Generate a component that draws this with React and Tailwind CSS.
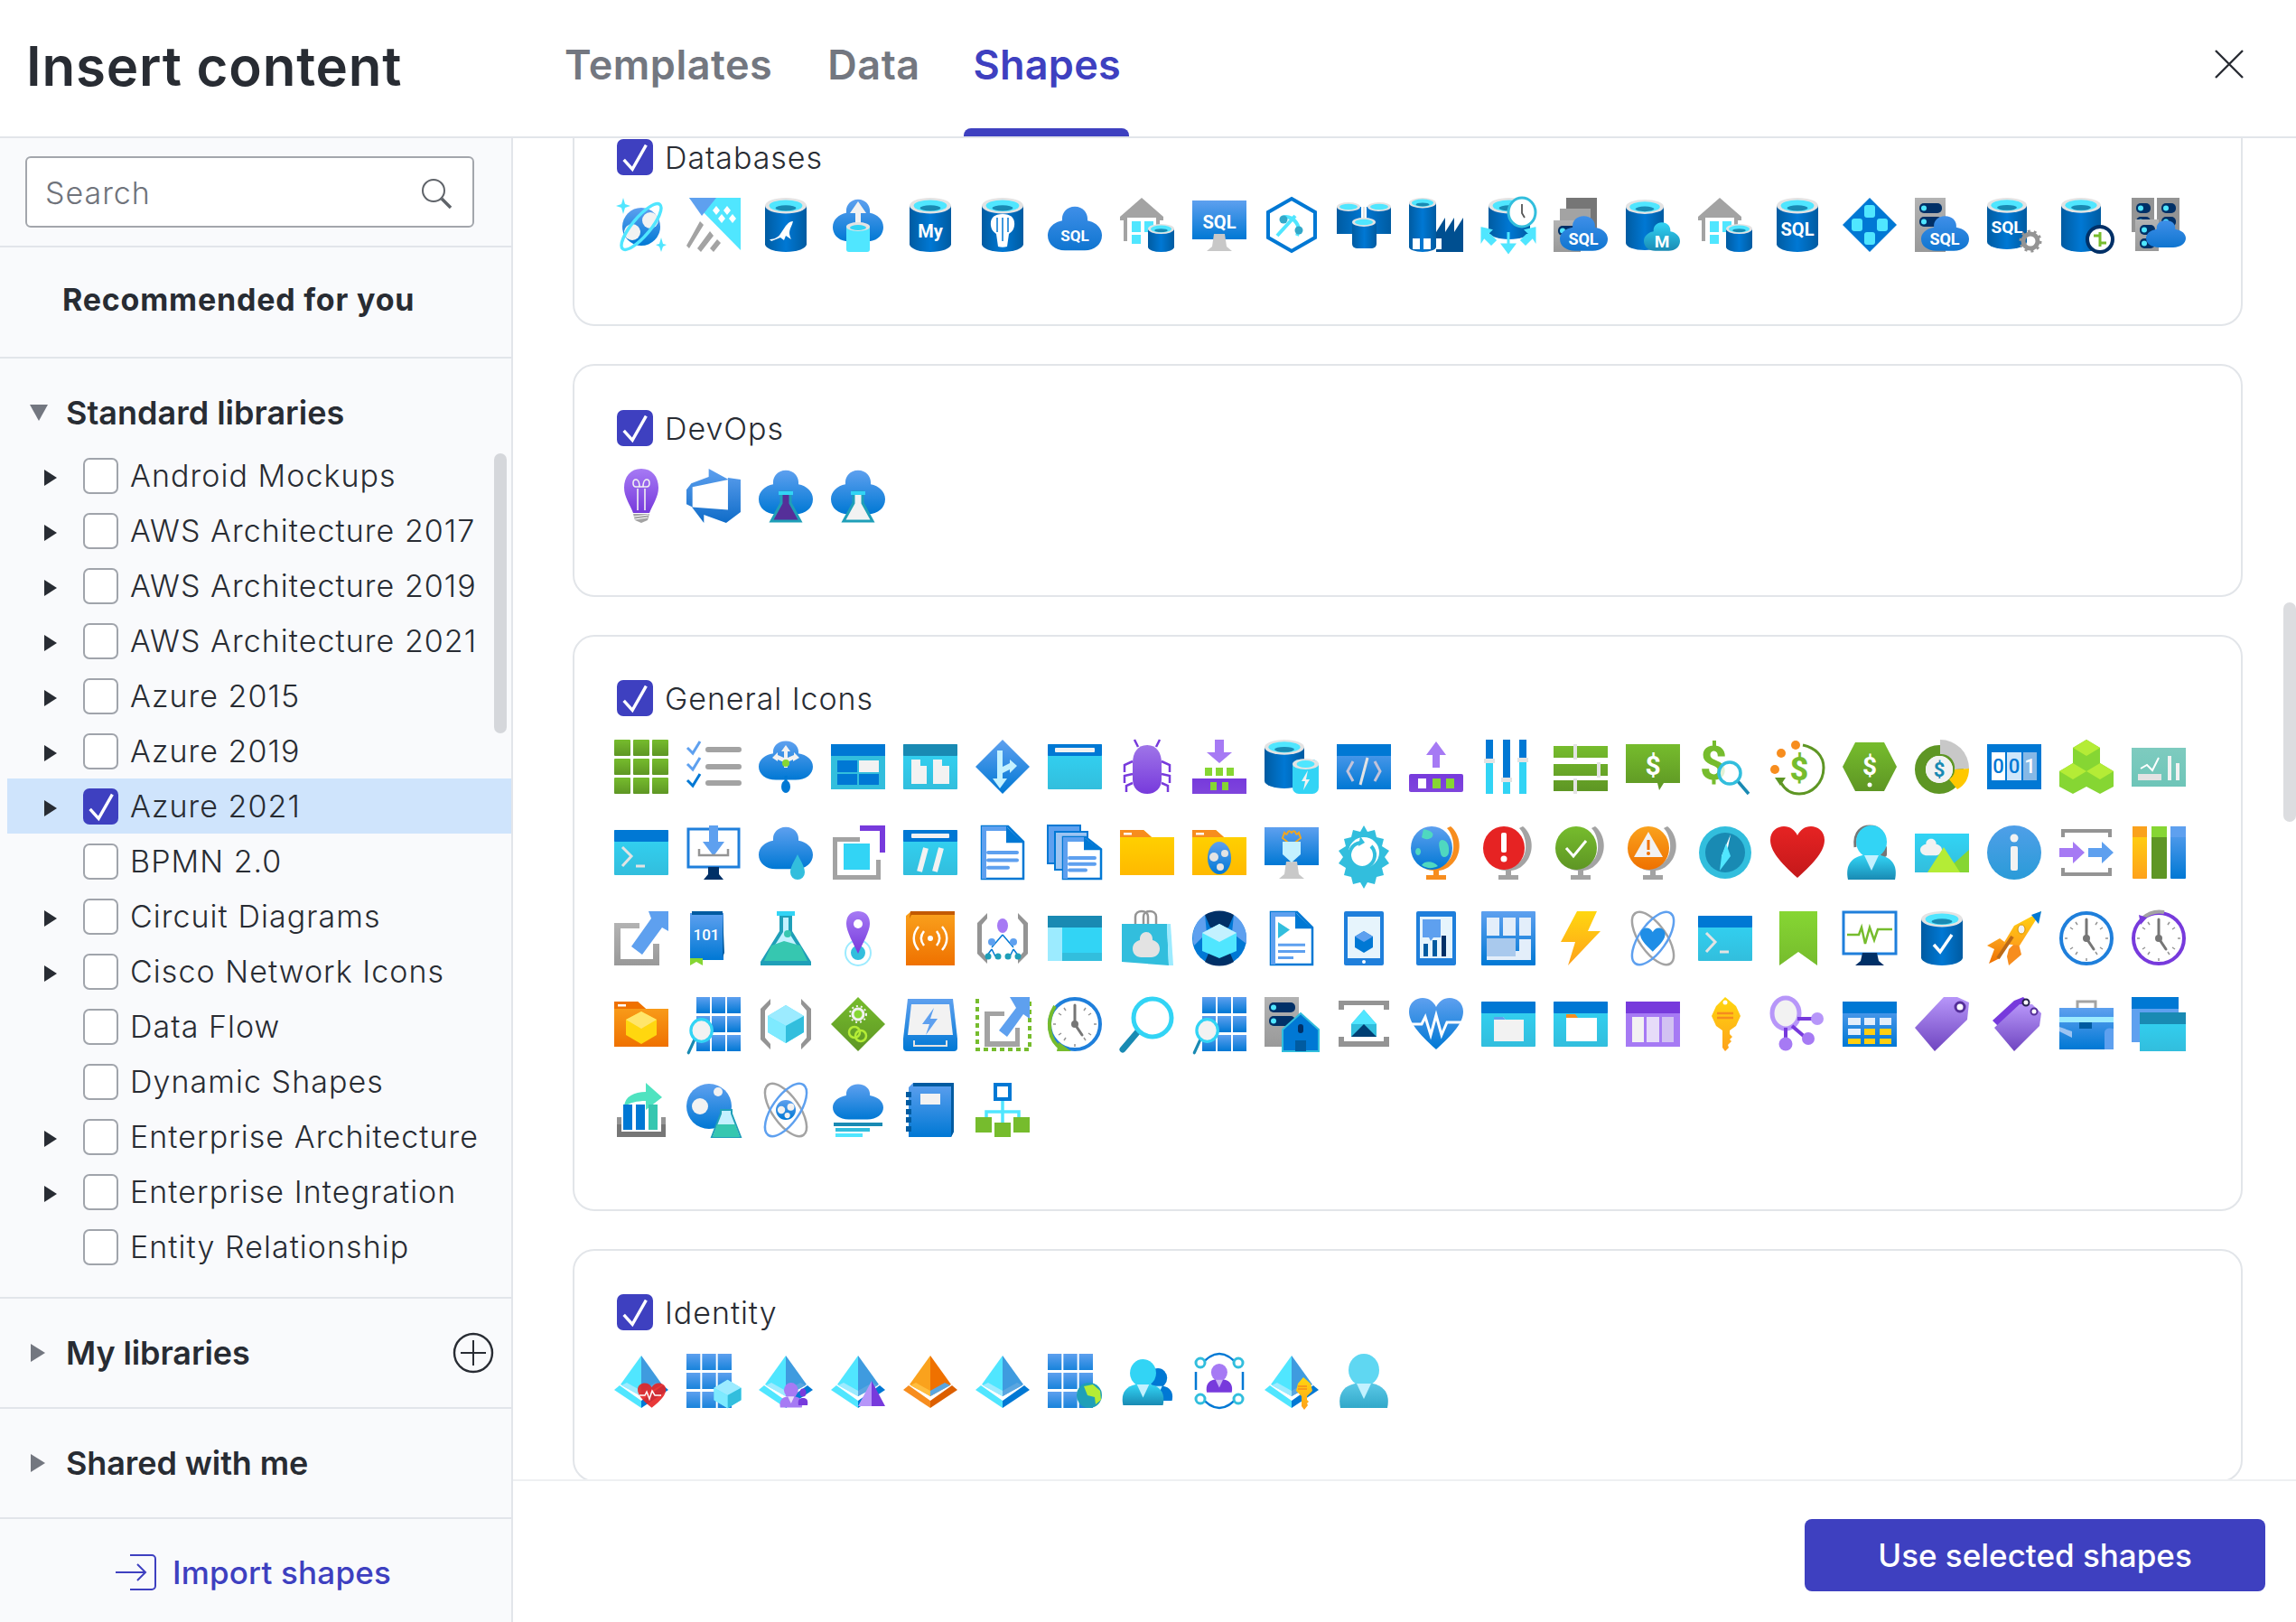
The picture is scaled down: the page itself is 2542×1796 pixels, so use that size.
import React from 'react';

const B = 'url(#gb)';
const CY = 'url(#gc)';
const CB = 'url(#gcy)';
const GR = 'url(#gg)';
const PU = 'url(#gp)';
const OR = 'url(#go)';
const YE = 'url(#gy)';
const GY = 'url(#gs)';
const TE = 'url(#gt)';

const CLOUD = 'M30 2c9 0 14 8 14 15v3c9 2 16 9 16 19 0 11-8 19-19 19H19C8 58 0 50 0 39c0-10 7-17 16-19v-3C16 10 21 2 30 2z';
const HEART = 'M30 58C10 40 0 28 0 16 0 6 8 1 15 1c7 0 12 4 15 10C33 5 38 1 45 1c7 0 15 5 15 15 0 12-10 24-30 42z';

const Cyl = ({ x = 0, y = 0, w = 46, h = 60 }) => {
    const rx = w / 2;
    const ry = w * 0.19;
    const cx = x + rx;
    const cy = y + ry;
    return (
        <>
            <path d={`M${x} ${cy}V${y + h - ry}A${rx} ${ry} 0 0 0 ${x + w} ${y + h - ry}V${cy}z`} fill={CB} />
            <ellipse cx={cx} cy={cy} rx={rx} ry={ry} fill="#e3e3e3" />
            <ellipse cx={cx} cy={cy} rx={rx * 0.8} ry={ry * 0.72} fill="#50e6ff" />
            <ellipse cx={cx} cy={cy + ry * 0.3} rx={rx * 0.5} ry={ry * 0.35} fill="#198ab3" />
        </>
    );
};

const Cloud = ({ x = 0, y = 0, w = 60, h = 60, f = B }) => (
    <path transform={`translate(${x} ${y}) scale(${w / 60} ${h / 60})`} d={CLOUD} fill={f} />
);

const T = ({ x, y, s = 18, f = '#fff', w = 700, children }) => (
    <text x={x} y={y} fontSize={s} fill={f} fontWeight={w} textAnchor="middle" fontFamily="Roboto, sans-serif">{children}</text>
);

const Win = ({ head = '#0078d4', body = CY, y = 5, h = 50 }) => (
    <>
        <rect y={y} width="60" height={h} rx="1" fill={body} />
        <rect y={y} width="60" height="13" rx="1" fill={head} />
    </>
);

const House = ({ dx = 0 }) => (
    <g transform={`translate(${dx} 0)`}>
        <path d="M24 0L48 21v4H0v-4z" fill="#a3a3a3" />
        <rect x="4" y="22" width="40" height="26" fill="#fff" />
        <path d="M4 22h4v26H4zM40 22h4v8h-4z" fill="#a3a3a3" />
        <path d="M13 26h10v12H13zM27 26h10v12H27zM13 41h10v10H13z" fill="#50e6ff" />
    </g>
);

const Monitor = ({ stand = '#c8c8c8' }) => (
    <path d="M24 40h12l2 14 6 5H16l6-5z" fill={stand} />
);

const Server = ({ x = 0, y = 0, w = 34, h = 60, rows = 2, f = GY }) => (
    <>
        <rect x={x} y={y} width={w} height={h} fill={f} />
        {[...Array(rows)].map((_, i) => (
            <g key={i}>
                <rect x={x + 5} y={y + 6 + i * 15} width={w - 9} height="11" rx="5" fill="#003067" />
                <circle cx={x + 10} cy={y + 11.5 + i * 15} r="3" fill="#50e6ff" />
            </g>
        ))}
    </>
);

const Grid = ({ f = B, x = 0, w = 60 }) => (
    <>
        {[0, 1, 2].map(r => [0, 1, 2].map(c => (
            <rect key={`${r}-${c}`} x={x + c * (w / 3)} y={r * 21} width={w / 3 - 2} height="18" fill={f} />
        )))}
    </>
);

const Mag = ({ x = 0, y = 0, s = 1 }) => (
    <g transform={`translate(${x} ${y}) scale(${s})`}>
        <path d="M12 36L2 58" stroke="#198ab3" strokeWidth="5" strokeLinecap="round" />
        <ellipse cx="24" cy="20" rx="18" ry="19" fill="#f2f2f2" stroke="#32d4f5" strokeWidth="5" />
    </g>
);

const Bracket = ({ f = '#949494' }) => (
    <path d="M13 2L2 13v34l11 11v-6l-6-7V15l6-7zM47 2l11 11v34L47 58v-6l6-7V15l-6-7z" fill={f} />
);

const Gem = ({ x = 0, y = 0, s = 1 }) => (
    <g transform={`translate(${x} ${y}) scale(${s})`}>
        <path d="M30 9l20 12v18L30 51 10 39V21z" fill="#50e6ff" />
        <path d="M30 9l20 12-20 11-20-11z" fill="#9cebff" />
        <path d="M30 32l20-11v18L30 51z" fill="#32bedd" />
        <path d="M30 32v19L10 39V21z" fill="#7eeaff" />
    </g>
);

const Clock = ({ ring = '#1f7fdb', hands = '#767676' }) => (
    <>
        <ellipse cx="30" cy="30" rx="28" ry="28" fill="#fff" stroke={ring} strokeWidth="4" />
        <path d="M30 9v21l8 12" fill="none" stroke={hands} strokeWidth="3" strokeLinecap="round" />
        <circle cx="30" cy="30" r="4" fill={hands} />
        <path d="M30 52v3M9 30H6M54 30h-3M18 12l2 3M42 12l-2 3M18 48l2-3M42 48l-2-3M12 42l3-2M12 18l3 2M48 18l-3 2M48 42l-3-2" stroke="#949494" strokeWidth="1.5" />
    </>
);

const Atom = ({ ring = '#5ea0ef', ring2 = '#a3a3a3' }) => (
    <>
        <ellipse cx="30" cy="30" rx="15" ry="34" transform="rotate(-35 30 30)" fill="none" stroke={ring2} strokeWidth="2.5" />
        <ellipse cx="30" cy="30" rx="15" ry="34" transform="rotate(35 30 30)" fill="none" stroke={ring} strokeWidth="2.5" />
    </>
);

const Ball = ({ cx = 30, cy = 30, r = 22 }) => (
    <>
        <circle cx={cx} cy={cy} r={r} fill={B} />
        <circle cx={cx - r * 0.45} cy={cy} r={r * 0.38} fill="#f2f2f2" />
        <circle cx={cx + r * 0.5} cy={cy - r * 0.3} r={r * 0.36} fill="#f2f2f2" />
        <circle cx={cx + r * 0.15} cy={cy + r * 0.55} r={r * 0.28} fill="#f2f2f2" />
    </>
);

const Doc = ({ x = 0, y = 0, w = 48, h = 60, play }) => (
    <g transform={`translate(${x} ${y})`}>
        <path d={`M1 1H${w - 18}L${w - 1} ${h * 0.3}V${h - 1}H1z`} fill="#fff" stroke="#0078d4" strokeWidth="2.5" />
        <path d={`M${w - 20} 1L${w - 1} ${h * 0.32}H${w - 20}z`} fill="#0078d4" />
        <path d={`M1 1H${w - 20}V6H6V${h - 1}H1z`} fill="#5ea0ef" />
        {!play && <path d={`M8 ${h * 0.5}H${w - 8}M8 ${h * 0.64}H${w - 8}M8 ${h * 0.78}H${w - 18}`} stroke="#5ea0ef" strokeWidth="4" strokeLinecap="round" />}
        {play && <path d={`M9 ${h * 0.2}L22 ${h * 0.34}L9 ${h * 0.5}z`} fill="#32bedd" />}
        {play && <path d={`M9 ${h * 0.62}H${w - 9}M9 ${h * 0.74}H${w - 9}M9 ${h * 0.86}H${w - 22}`} stroke="#5ea0ef" strokeWidth="3" />}
    </g>
);

const Folder = ({ f = 'url(#gfy)', tab = '#f78d1e' }) => (
    <>
        <path d="M0 5h26l9 8h25v42H0z" fill={f} />
        <path d="M0 5h26l9 8H0z" fill={tab} />
        <rect x="4" y="8" width="9" height="2.5" fill="#fff" />
    </>
);

const Orb = ({ fill, ring = '#a3a3a3', children }) => (
    <>
        <path d="M46 1c10 8 13 24 6 36-5 8-11 12-19 13v5h8v5H19v-5h8v-5c-3 0-6-1-9-2l2-3c10 4 20 0 26-9 6-10 3-26-4-33z" fill={ring} />
        <ellipse cx="25" cy="25" rx="23" ry="24" fill={fill} />
        {children}
    </>
);

const Pyr = ({ l = '#50e6ff', r = '#3f9bdf', low = '#9cebff', bl = '#50e6ff', br = '#0078d4' }) => (
    <>
        <path d="M30 2L7 34l23 13z" fill={l} />
        <path d="M30 2L53 34 30 47z" fill={r} />
        <path d="M14 32l16 9v6L8 35z" fill={low} />
        <path d="M46 32l-16 9v6l22-12z" fill="#5aa6e0" />
        <path d="M6 35L0 40l30 20V52z" fill={bl} />
        <path d="M54 35l6 5-30 20V52z" fill={br} />
    </>
);

const Person = ({ x = 0, y = 0, s = 1, head = '#32d4f5', body = TE, collar = '#c3f1ff' }) => (
    <g transform={`translate(${x} ${y}) scale(${s})`}>
        <ellipse cx="30" cy="18" rx="17" ry="18" fill={head} />
        <path d="M4 60c-3-14 2-24 16-27h20c14 3 19 13 16 27z" fill={body} />
        <path d="M22 33h16l-8 17z" fill={collar} />
    </g>
);

const databases = [
    <><path d="M10 0l2 7 6 2-6 2-2 7-2-7-6-2 6-2zM52 44l2 7 4 1-4 2-2 6-2-6-4-2 4-1z" fill="#50e6ff" /><circle cx="30" cy="32" r="21" fill={B} /><circle cx="20" cy="38" r="9" fill="#f2f2f2" /><circle cx="40" cy="25" r="9" fill="#f2f2f2" /><ellipse cx="30" cy="32" rx="32" ry="10" transform="rotate(-50 30 32)" fill="none" stroke="#50e6ff" strokeWidth="3.5" /></>,
    <><path d="M3 0h57v58z" fill="#50e6ff" /><path d="M3 0h30L17 20z" fill="#5ea0ef" /><path d="M33 9l4 5-4 5-4-5zM45 9l4 5-4 5-4-5zM39 18l4 5-4 5-4-5zM51 18l4 5-4 5-4-5z" fill="#fff" /><path d="M15 26l4 4L3 56l-3-3zM26 37l4 5-14 18-4-4zM34 46l4 4-8 10-4-4z" fill="#a3a3a3" /></>,
    <><Cyl x={7} /><path d="M12 46c3 0 9-1 12-6l6-9c2-2 4-5 8-5-1 5-4 8-4 13 0 3 2 7 2 7l-6-4-2 5-4-3-10 4z" fill="#fff" /></>,
    <><Cloud x={2} w={56} h={50} /><path d="M30 4l9 13h-6v16h-6V17h-6z" fill="#f2f2f2" /><rect x="17" y="30" width="26" height="30" rx="3" fill="#50e6ff" /><ellipse cx="30" cy="32" rx="13" ry="5" fill="#e3e3e3" /><ellipse cx="30" cy="33" rx="9" ry="3" fill="#32d4f5" /></>,
    <><Cyl x={7} /><T x={30} y={44} s={20}>My</T></>,
    <><Cyl x={7} /><path d="M30 18c10 0 14 5 13 13-1 6-4 7-6 9l-2 14c-3 1-7 1-10 0l-2-14c-2-2-5-3-6-9-1-8 3-13 13-13z" fill="#fff" /><path d="M24 22v16M36 22v16M30 22v26" stroke="#0078d4" strokeWidth="1.5" /></>,
    <><Cloud y={8} h={52} w={60} f="url(#gb2)" /><T x={30} y={48} s={17}>SQL</T></>,
    <><House /><Cyl x={31} y={29} w={29} h={31} /></>,
    <><rect y="3" width="60" height="43" fill={B} /><Monitor /><T x={30} y={34} s={20}>SQL</T></>,
    <><path d="M30 1l26 15v28L30 59 4 44V16z" fill="none" stroke="#0078d4" strokeWidth="4" /><path d="M14 42l20-22M20 22c8-4 22 6 16 20" fill="none" stroke="#50e6ff" strokeWidth="4" /><circle cx="21" cy="24" r="4.5" fill="#32a8c9" /><circle cx="38" cy="36" r="4.5" fill="#32a8c9" /></>,
    <><path d="M0 10h27v30H0zM33 10h27v30H33z" fill={CB} /><rect x="17" y="26" width="27" height="30" rx="5" fill={CB} /><ellipse cx="13" cy="10" rx="13" ry="5" fill="#e3e3e3" /><ellipse cx="47" cy="10" rx="13" ry="5" fill="#e3e3e3" /><ellipse cx="13" cy="10" rx="10" ry="3.2" fill="#50e6ff" /><ellipse cx="47" cy="10" rx="10" ry="3.2" fill="#50e6ff" /><ellipse cx="30" cy="27" rx="13" ry="5" fill="#e3e3e3" /><ellipse cx="30" cy="27" rx="10" ry="3.2" fill="#50e6ff" /><path d="M29 10h2v12h-2z" fill="#e3e3e3" /></>,
    <><Cyl x={0} w={30} /><path d="M30 60V38l10-16v16l10-16v16l10-16v38z" fill="#004f90" /><path d="M16 45h8v12h-8zM4 45h8v12H4zM30 45h6v12h-6z" fill="#fff" /></>,
    <><Cyl x={8} w={46} h={46} /><ellipse cx="45" cy="16" rx="15" ry="16" fill="#fff" stroke="#32bedd" strokeWidth="3" /><path d="M45 7v10l3 5" fill="none" stroke="#555" strokeWidth="1.8" /><path d="M30 38v14h-6l6 8 6-8h-6M1 34l9 2-3 3 8 8-4 4-8-8-2 3zM59 34l-9 2 3 3-8 8 4 4 8-8 2 3z" fill="#50e6ff" stroke="#50e6ff" strokeWidth="3" /></>,
    <><rect x="14" y="0" width="34" height="50" fill="#767676" /><rect x="7" y="12" width="34" height="40" fill="#a3a3a3" /><Server y={25} w={30} h={35} rows={1} /><Cloud x={7} y={19} w={53} h={41} f="url(#gb2)" /><T x={33} y={52} s={18}>SQL</T></>,
    <><Cyl x={0} y={2} w={42} h={56} /><Cloud x={20} y={26} w={40} h={34} f={TE} /><T x={40} y={55} s={19}>M</T></>,
    <><House /><Cyl x={31} y={29} w={29} h={31} /></>,
    <><Cyl x={7} /><T x={30} y={42} s={20}>SQL</T></>,
    <><path d="M30 0l30 30-30 30L0 30z" fill="#0078d4" /><rect x="24" y="8" width="12" height="14" rx="3" fill="#50e6ff" /><rect x="24" y="38" width="12" height="14" rx="3" fill="#50e6ff" /><rect x="10" y="23" width="12" height="14" rx="3" fill="#50e6ff" /><rect x="38" y="23" width="12" height="14" rx="3" fill="#50e6ff" /></>,
    <><Server w={34} h={60} /><Cloud x={7} y={19} w={53} h={41} f="url(#gb2)" /><T x={33} y={52} s={18}>SQL</T></>,
    <><Cyl x={0} w={44} h={57} /><T x={22} y={39} s={19}>SQL</T><circle cx="48" cy="48" r="8" fill="none" stroke="#949494" strokeWidth="5" /><circle cx="48" cy="48" r="11" fill="none" stroke="#949494" strokeWidth="3" strokeDasharray="3 3.9" /></>,
    <><Cyl x={2} w={44} /><circle cx="45" cy="46" r="14" fill="#fff" stroke="#003067" strokeWidth="4" /><path d="M38 42h7v4M52 50h-7v-4M45 38v8M45 46v8" fill="none" stroke="#76bc2d" strokeWidth="3" /></>,
    <><Server w={25} h={38} f="#949494" /><Server x={28} w={25} h={38} f="#949494" /><Server x={4} y={24} w={26} h={35} /><Cloud x={16} y={24} w={44} h={32} f="url(#gb2)" /></>,
];

const devops = [
    <><path d="M30 0c12 0 19 9 19 21 0 10-6 18-10 28H21C17 39 11 31 11 21 11 9 18 0 30 0z" fill="url(#gp2)" /><path d="M26 46V22M34 46V22M24 12c-4 0-4 8 0 8h12c4 0 4-8 0-8s-4 8-4 8h-4s0-8-4-8z" fill="none" stroke="#f2f2f2" strokeWidth="1.6" /><path d="M21 50h18l-2 7-7 3-7-3z" fill="#a3a3a3" /><path d="M22 53l16-2M23 56l14-2" stroke="#fff" strokeWidth="1" /></>,
    <path transform="scale(3.33)" d="M18 3.6v10.8L13.2 18l-7.4-2.7V18l-4-5.2 12 .9V3zM14 3.6L7.4 0v2.7L1.6 4.9 0 7v4.8l2 1V6.1z" fill="url(#gb3)" />,
    <><Cloud h={52} /><path d="M25 26h10v12l11 20H14l11-20z" fill="#552f99" stroke="#1f9fb8" strokeWidth="3" /><rect x="22" y="25" width="16" height="4" fill="#32d4f5" /></>,
    <><Cloud h={52} /><path d="M25 26h10v12l11 20H14l11-20z" fill="#f2f2f2" stroke="#1f9fb8" strokeWidth="3" /><rect x="22" y="25" width="16" height="4" fill="#32d4f5" /></>,
];

const general = [
    // row 1
    <>{[0, 1, 2].map(r => [0, 1, 2].map(c => <rect key={`${r}${c}`} x={c * 21} y={r * 21} width="18" height="18" rx="1" fill={GR} />))}</>,
    <><path d="M1 9l6 6L15 2M1 27l6 6L15 20" fill="none" stroke="#5ea0ef" strokeWidth="3" /><path d="M1 45l6 6 8-13" fill="none" stroke="#0078d4" strokeWidth="3" /><path d="M24 11h34M24 30h34M24 48h34" stroke="#a3a3a3" strokeWidth="6" strokeLinecap="round" /></>,
    <><Cloud w={60} h={46} /><path d="M30 6l5 7h-3v7l7-3v-3l6 6-7 4v-2l-6 3v6h-4v-6l-7-3v2l-6-4 6-6v3l7 3v-7h-3z" fill="#f2f2f2" /><circle cx="30" cy="26" r="4" fill="#86d633" /><ellipse cx="30" cy="52" rx="5" ry="7" fill="#0078d4" /><rect x="28.5" y="40" width="3" height="8" fill="#0078d4" /></>,
    <><rect y="5" width="60" height="50" fill="#32bedd" /><rect y="5" width="60" height="13" fill="#0078d4" /><rect x="7" y="23" width="22" height="13" fill="#0078d4" /><rect x="31" y="23" width="22" height="13" fill="#f2f2f2" /><rect x="7" y="38" width="22" height="12" fill="#0078d4" /><rect x="31" y="38" width="22" height="12" fill="#0078d4" /></>,
    <><Win head="#198ab3" /><path d="M9 22h10v7h7v20H9zM33 22h10v7h8v20H33z" fill="#f2f2f2" /></>,
    <><path d="M30 0l30 30-30 30L0 30z" fill={B} /><path d="M30 12v18l8-4v-4l8 7-8 8v-4l-8 4v6h5l-8 11-8-11h5V12z" fill="#c3f1ff" /></>,
    <><Win /><rect x="8" y="9" width="44" height="5" rx="1" fill="#f2f2f2" /></>,
    <><path d="M20 8L16 0M40 8l4-8" stroke="#773adc" strokeWidth="2.5" /><path d="M30 6c11 0 16 9 16 20v18c0 10-7 16-16 16s-16-6-16-16V26C14 15 19 6 30 6z" fill="url(#gp3)" /><path d="M14 24L5 28v8M46 24l9 4v8M14 38l-9 2v8M46 38l9 2v8M14 48l-7 3v7M46 48l7 3v7" fill="none" stroke="#773adc" strokeWidth="2.5" /></>,
    <><path d="M25 0h10v14h9L30 26 16 14h9z" fill="#a67af4" /><path d="M14 31h8v9h-8zM26 31h8v9h-8zM38 31h8v9h-8z" fill="#86d633" /><rect y="43" width="60" height="17" fill={PU} /><path d="M20 47h7v9h-7zM33 47h7v9h-7z" fill="#86d633" /></>,
    <><Cyl x={0} w={44} h={54} /><rect x="31" y="22" width="29" height="38" rx="7" fill="#32d4f5" /><ellipse cx="45.5" cy="27" rx="14.5" ry="6" fill="#e3e3e3" /><ellipse cx="45.5" cy="27" rx="10" ry="4" fill="#50e6ff" /><path d="M48 34l-7 12h4l-2 10 7-12h-4z" fill="#f2f2f2" /></>,
    <><rect y="5" width="60" height="50" fill={B} /><rect y="5" width="60" height="13" fill="#0078d4" /><path d="M18 24L12 35l6 11M42 24l6 11-6 11" fill="none" stroke="#c3c3d9" strokeWidth="3" /><path d="M34 20l-8 30" stroke="#e3e3e3" strokeWidth="3" /></>,
    <><path d="M30 2l11 15h-7v14h-8V17h-7z" fill="#a67af4" /><rect y="38" width="60" height="20" rx="2" fill={PU} /><path d="M10 43h9v11h-9z" fill="#fff" /><path d="M26 43h9v11h-9zM41 43h9v11h-9z" fill="#86d633" /></>,
    <><path d="M5 0h8v24H5zM24 0h8v44h-8zM42 0h8v20h-8z" fill="#0078d4" /><path d="M5 24h8v36H5zM24 44h8v16h-8zM42 20h8v40h-8z" fill="#32d4f5" /><path d="M3 21h12v5H3zM22 42h12v5H22zM40 20h12v5H40z" fill="#e3e3e3" /></>,
    <><path d="M0 7h60v13H0zM0 27h60v13H0zM0 45h60v12H0z" fill={GR} /><path d="M22 5h4v17h-4zM48 25h4v17h-4zM22 43h4v17h-4z" fill="#e3e3e3" /></>,
    <><path d="M0 5h60v43H42l-5 8-2-8H0z" fill={GR} /><T x={30} y={39} s={30}>$</T></>,
    <><T x={17} y={44} s={52} f="#76bc2d" w={800}>$</T><path d="M44 46l12 14" stroke="#198ab3" strokeWidth="3.5" /><circle cx="35" cy="37" r="12" fill="#fff" fillOpacity=".8" stroke="#32bedd" strokeWidth="3.5" /></>,
    <><circle cx="28" cy="6" r="5" fill="#f78d1e" /><circle cx="12" cy="15" r="5" fill="#f78d1e" /><circle cx="5" cy="33" r="5" fill="#f78d1e" /><path d="M36 6c14 3 23 12 23 25 0 17-13 29-27 29-9 0-16-5-20-12" fill="none" stroke="#5e9624" strokeWidth="3" /><path d="M5 42h12l-6 9z" fill="#5e9624" /><T x={32} y={45} s={36} f="#76bc2d" w={800}>$</T></>,
    <><path d="M14 3h32l14 27-14 27H14L0 30z" fill={GR} /><T x={30} y={39} s={28}>$</T><circle cx="30" cy="50" r="2.5" fill="#fff" /></>,
    <><circle cx="27" cy="33" r="21" fill="none" stroke="#5e9624" strokeWidth="12" /><path d="M28 0a32 32 0 0 1 32 32l-16 1A15 15 0 0 0 28 16z" fill="#c8c8c8" /><path d="M44 33l16-1c0 11-5 19-13 23l-9-11c4-3 6-6 6-11z" fill="#ffc800" /><circle cx="27" cy="33" r="15" fill="#f2f2f2" /><T x={27} y={41} s={22} f="#198ab3">$</T></>,
    <><rect y="5" width="60" height="50" fill="#0078d4" /><path d="M5 14h15v31H5z" fill="#fff" /><path d="M22 14h16v31H22z" fill="#cfe6fa" /><path d="M40 14h15v31H40z" fill="#86b8e6" /><T x={12.5} y={37} s={22} f="#0078d4" w={500}>0</T><T x={30} y={37} s={22} f="#0078d4" w={500}>0</T><T x={47.5} y={37} s={22} w={500}>1</T></>,
    <><path d="M30 0l15 9v18l-15 9-15-9V9z" fill="#86d633" /><path d="M30 0l15 9-15 9-15-9z" fill="#b4ec36" /><path d="M15 26l15 9v17l-15 8-15-8V35z" fill="#86d633" /><path d="M45 26l15 9v17l-15 8-15-8V35z" fill="#86d633" /><path d="M15 26l15 9-15 9-15-9zM45 26l15 9-15 9-15-9z" fill="#b4ec36" /></>,
    <><rect y="9" width="60" height="43" fill="url(#gt3)" /><path d="M10 32l7-4 6 6 7-14" fill="none" stroke="#fff" strokeWidth="2" /><rect x="7" y="38" width="26" height="7" fill="#e3e3e3" /><path d="M40 18h4v27h-4zM49 26h4v19h-4z" fill="#f2f2f2" /></>,
    // row 2
    <><Win head="#0078d4" /><path d="M9 24l10 10-10 11" fill="none" stroke="#e3e3e3" strokeWidth="3" /><path d="M24 45h10" stroke="#e3e3e3" strokeWidth="3" /></>,
    <><rect x="2" y="4" width="56" height="42" fill="#fff" stroke="#1f7fdb" strokeWidth="3" /><path d="M24 46h12v8l5 6H19l5-6z" fill="#003067" /><path d="M25 0h10v18h7L30 34 18 18h7z" fill="#5ea0ef" /><path d="M14 26v7h32v-7" fill="none" stroke="#949494" strokeWidth="2.5" /></>,
    <><Cloud h={50} /><path d="M43 32c4 8 8 14 8 20a8 8 0 0 1-16 0c0-6 4-12 8-20z" fill="#32bedd" /></>,
    <><path d="M2 13h30v5H7v37h43V38h5v22H2z" fill="#a3a3a3" /><path d="M32 0h28v30h-6V6H32z" fill="#773adc" /><rect x="14" y="20" width="29" height="29" fill="#32d4f5" /></>,
    <><Win /><rect x="9" y="9" width="42" height="5" rx="1" fill="#f2f2f2" /><path d="M25 25l-7 26M42 25l-7 26" stroke="#f2f2f2" strokeWidth="6" /></>,
    <Doc x={6} />,
    <><rect x="0" y="0" width="36" height="42" fill="#5ea0ef" stroke="#0078d4" strokeWidth="2" /><rect x="8" y="7" width="36" height="42" fill="#9cc4f2" stroke="#0078d4" strokeWidth="2" /><Doc x={16} y={12} w={44} h={48} /></>,
    <Folder />,
    <><Folder /><ellipse cx="30" cy="36" rx="13" ry="18" fill={B} /><circle cx="24" cy="35" r="5" fill="#e3e3e3" /><circle cx="36" cy="31" r="4" fill="#e3e3e3" /><circle cx="31" cy="46" r="4" fill="#e3e3e3" /></>,
    <><rect y="2" width="60" height="42" fill={B} /><Monitor /><path d="M30 8c6-6 3 6 8 0l2 6-10 8-10-8 2-6c5 6 2-6 8 0z" fill="none" stroke="#f2a61d" strokeWidth="2" /><path d="M20 18h20v14l-10 9-10-9z" fill="#c3f1ff" /></>,
    <><path d="M30 0l4 7 8-2 2 8 8 2-2 8 8 5-5 7 5 7-8 5 2 8-8 2-2 8-8-2-4 7-4-7-8 2-2-8-8-2 2-8-8-5 5-7-5-7 8-5-2-8 8-2 2-8 8 2z" fill="#32bedd" /><circle cx="30" cy="30" r="17" fill="#fff" /><path d="M38 23a14 14 0 1 1-12-4" fill="none" stroke="#32bedd" strokeWidth="4" /><path d="M26 12l5 7-7 4z" fill="#32bedd" /></>,
    <><path d="M46 1c10 8 13 24 6 36-5 8-11 12-19 13v5h8v5H19v-5h8v-5c-3 0-6-1-9-2l2-3c10 4 20 0 26-9 6-10 3-26-4-33z" fill="#f78d1e" /><ellipse cx="25" cy="25" rx="23" ry="24" fill={B} /><path d="M16 4c8 2 12 4 10 8s-9 4-12 1zM36 16c6 0 9 6 8 14-1 6-8 7-9 1s-4-13 1-15zM14 44c4-6 14-4 18 1-6 3-12 3-18-1zM10 25a3 4 0 1 0 .1 0z" fill="#4fd8c0" /></>,
    <Orb fill="#e62323"><rect x="22" y="8" width="6" height="22" rx="2" fill="#fff" /><circle cx="25" cy="37" r="3.5" fill="#fff" /></Orb>,
    <Orb fill={GR}><path d="M14 25l8 9 14-17" fill="none" stroke="#fff" strokeWidth="3" /></Orb>,
    <Orb fill={OR}><path d="M25 7l16 28H9z" fill="#f2f2f2" /><rect x="23.5" y="16" width="3" height="11" fill="#ef7100" /><circle cx="25" cy="31" r="2" fill="#ef7100" /></Orb>,
    <><circle cx="30" cy="30" r="29" fill="#32bedd" /><circle cx="30" cy="30" r="22" fill="#198ab3" /><path d="M36 10l-10 24 5 0z" fill="#fff" /><path d="M26 34l-2 16 12-16-5-14z" fill="#50e6ff" /></>,
    <path d={HEART} fill="url(#gr)" />,
    <><path d="M14 24C12 6 22 1 30 1s19 5 16 24" fill="none" stroke="#767676" strokeWidth="3" /><rect x="42" y="22" width="7" height="13" rx="3" fill="#767676" /><Person x={2} s={1} /></>,
    <><rect y="9" width="60" height="43" fill={CY} /><Cloud x={6} y={14} w={24} h={20} f="#f2f2f2" /><path d="M60 27v25H32z" fill="#86d633" /><path d="M32 24l18 28H14z" fill="#b4ec36" /></>,
    <><circle cx="30" cy="30" r="30" fill="url(#gb4)" /><circle cx="30" cy="14" r="4.5" fill="#f2f2f2" /><rect x="26" y="23" width="8" height="27" rx="2" fill="#f2f2f2" /></>,
    <><path d="M2 13V4h56v9h-4V8H6v5zM2 47v9h56v-9h-4v5H6v-5z" fill="#949494" /><path d="M0 25h15v-7l13 12-13 12v-7H0z" fill="#a67af4" /><path d="M32 25h15v-7l13 12-13 12v-7H32z" fill="#5ea0ef" /></>,
    <><rect x="1" y="1" width="16" height="58" rx="1" fill={YE} /><rect x="1" y="1" width="16" height="12" fill="#faa21d" /><rect x="22" y="1" width="17" height="58" rx="1" fill="#5e9624" /><rect x="22" y="1" width="17" height="12" fill="#86d633" /><rect x="43" y="1" width="17" height="58" rx="1" fill={B} /><rect x="43" y="1" width="17" height="12" fill="#5ea0ef" /></>,
    // row 3
    <><path d="M0 13h28v6H7v34h36V36h7v24H0z" fill="url(#gs)" /><path d="M38 0h22v22l-7-4-22 30-12-9 22-31z" fill="#5ea0ef" /></>,
    <><path d="M4 2h37v52H4z" fill={B} /><path d="M6 0h34l2 46-2 5V4H6z" fill="#005ba1" /><path d="M4 52h14v8l-7-4-7 4z" fill="#86d633" /><T x={22} y={32} s={17} w={500}>101</T></>,
    <><path d="M23 4h14v20l21 32H2l21-32z" fill="#c3f1ff" /><path d="M23 4h14v18l21 34v4H2v-4l21-34zm4 3v16L7 55h46L33 23V7z" fill="#1f9fb8" /><path d="M20 0h20v5H20z" fill="#32d4f5" /><path d="M14 38l14-5 18 5 8 17H6z" fill="#36c7b0" /><circle cx="32" cy="25" r="4" fill="#36c7b0" /></>,
    <><ellipse cx="30" cy="46" rx="14" ry="14" fill="none" stroke="#9cebff" strokeWidth="2" /><ellipse cx="30" cy="46" rx="9" ry="9" fill="#32bedd" stroke="#fff" strokeWidth="2" /><path d="M30 0c9 0 13 6 13 14s-8 22-13 33c-5-11-13-25-13-33S21 0 30 0z" fill="url(#gp2)" /><circle cx="30" cy="14" r="5" fill="#fff" /></>,
    <><path d="M3 5l6-5h48v60H3z" fill={OR} /><path d="M8 0h49v4H9L7 8z" fill="#c35a00" /><circle cx="30" cy="30" r="3" fill="#fff" /><path d="M23 22c-4 5-4 11 0 16M37 22c4 5 4 11 0 16M17 17c-7 8-7 18 0 26M43 17c7 8 7 18 0 26" fill="none" stroke="#fff" strokeWidth="2.5" /></>,
    <><Bracket /><path d="M30 26L18 40M30 26l12 14M18 42l-6 8M18 42l4 8M42 42l-4 8M42 42l6 8" stroke="#0078d4" strokeWidth="1.5" fill="none" /><ellipse cx="30" cy="16" rx="6" ry="8" fill="#a67af4" /><circle cx="18" cy="34" r="4" fill="#5ea0ef" /><circle cx="42" cy="34" r="4" fill="#5ea0ef" /><circle cx="14" cy="50" r="3.5" fill="#1f9fb8" /><circle cx="25" cy="50" r="3.5" fill="#1f9fb8" /><circle cx="36" cy="50" r="3.5" fill="#1f9fb8" /><circle cx="47" cy="50" r="3.5" fill="#1f9fb8" /></>,
    <><rect y="5" width="60" height="50" fill="#32d4f5" /><rect y="5" width="60" height="13" fill="#198ab3" /><rect y="18" width="16" height="37" fill="#9cebff" /><rect x="16" y="46" width="44" height="9" fill="#32bedd" /></>,
    <><path d="M17 14V6c0-8 14-8 14 0v8M26 14V6c0-8 14-8 14 0v8" fill="none" stroke="#949494" strokeWidth="2.5" /><path d="M2 14h50l2 46-52-4z" fill="#32bedd" /><path d="M52 14h4l3 46h-5z" fill="#9cebff" /><Cloud x={14} y={22} w={30} h={30} f="#e3e3e3" /></>,
    <><circle cx="30" cy="30" r="30" fill="#0078d4" /><path d="M14 4A30 30 0 0 1 46 4L40 18H20z" fill="#003067" /><path d="M46 4a30 30 0 0 1 14 26v6L44 24z" fill="#5ea0ef" /><path d="M14 56A30 30 0 0 0 46 56L40 42H20z" fill="#003067" /><path d="M14 4A30 30 0 0 0 2 38l14-14z" fill="#5ea0ef" /><path d="M30 14l19 10v20L30 52 11 44V24z" fill="#50e6ff" /><path d="M30 14l19 10-19 10-19-10z" fill="#c3f1ff" /></>,
    <Doc x={6} play />,
    <><rect x="8" y="0" width="44" height="60" rx="2" fill="#1f7fdb" /><rect x="12" y="6" width="36" height="46" fill="#e6f4fc" /><path d="M30 22l10 6v12l-10 6-10-6V28z" fill="#0078d4" /><path d="M30 22l10 6-10 6-10-6z" fill="#5ea0ef" /><circle cx="30" cy="56" r="2" fill="#fff" /></>,
    <><rect x="8" y="0" width="44" height="60" rx="2" fill="#1f7fdb" /><rect x="12" y="6" width="36" height="46" fill="#e6f4fc" /><path d="M15 9h20v20H27l-3 4-2-4h-7z" fill="#5ea0ef" /><path d="M16 36h5v14h-5zM26 32h5v18h-5z" fill="#005ba1" /><path d="M36 27h5v23h-5z" fill="#003067" /></>,
    <><rect width="60" height="60" fill={B} rx="1" /><path d="M6 7h14v20H6zM24 7h14v20H24zM42 7h13v20H42zM42 31h13v19H42zM6 44h49v10H6z" fill="#e3eefa" /><rect x="6" y="30" width="32" height="20" fill="#a9c9ed" /></>,
    <path d="M26 0h22L38 22h14L16 60l8-26H8z" fill={YE} />,
    <><Atom /><path d={HEART} fill="#1f8ee6" transform="translate(16 18) scale(.46)" /></>,
    <><Win /><path d="M9 24l10 10-10 11" fill="none" stroke="#e3e3e3" strokeWidth="3" /><path d="M24 45h10" stroke="#e3e3e3" strokeWidth="3" /></>,
    <path d="M10 0h42v60L31 45 10 60z" fill="url(#gg2)" />,
    <><rect x="1" y="1" width="58" height="46" fill="#fff" stroke="#1f7fdb" strokeWidth="3" /><path d="M22 46h16l2 9 6 5H14l6-5z" fill="#003067" /><path d="M5 26h13l3-8 4 18 5-18 5 14 4-12h16" fill="none" stroke="#76bc2d" strokeWidth="2.5" /></>,
    <><Cyl x={7} /><path d="M21 37l7 8 13-19" fill="none" stroke="#fff" strokeWidth="3.5" /></>,
    <><path d="M14 30L0 38l8 4-6 16 12-6 8-16z" fill={OR} /><path d="M24 42L34 32l4 16-14 12-2-10z" fill="#f78d1e" /><path d="M60 0L36 38 18 36 30 16z" fill={YE} /><path d="M49 4L60 0l-3 14z" fill="#0078d4" /><ellipse cx="38" cy="20" rx="4" ry="5" fill="#f2f2f2" stroke="#d99500" /><path d="M28 28L12 52" stroke="#bb6a18" strokeWidth="4" /></>,
    <Clock />,
    <><Clock ring="#773adc" /><path d="M12 8a28 28 0 0 1 24-7" fill="none" stroke="#a3a3a3" strokeWidth="4" /><path d="M8 4l9 3-7 8z" fill="#773adc" /></>,
    // row 4
    <><Folder f={OR} tab="#ef7100" /><path d="M30 16l17 9v17l-17 10-17-10V25z" fill="#ffd70f" /><path d="M30 16l17 9-17 10-17-10z" fill="#ffe56b" /></>,
    <><Grid x={11} w={51} /><Mag x={1} y={24} s={0.65} /></>,
    <><Bracket /><Gem /></>,
    <><path d="M30 0l30 30-30 30L0 30z" fill={GR} /><circle cx="30" cy="19" r="6" fill="#86d633" stroke="#f2f2f2" strokeWidth="3" /><circle cx="30" cy="19" r="9" fill="none" stroke="#f2f2f2" strokeWidth="2" strokeDasharray="2 3" /><circle cx="26" cy="39" r="6" fill="none" stroke="#b4ec36" strokeWidth="2.5" /><circle cx="33" cy="43" r="6" fill="none" stroke="#b4ec36" strokeWidth="2.5" /></>,
    <><path d="M5 2h50l5 44v10a4 4 0 0 1-4 4H4a4 4 0 0 1-4-4V46z" fill={B} /><path d="M9 8h42l4 34H5z" fill="#f2f2f2" /><path d="M34 12l-13 18h8l-4 12 13-18h-8z" fill="#5ea0ef" /><path d="M12 48v6h36v-6" fill="none" stroke="#e3e3e3" strokeWidth="2" /></>,
    <><path d="M2 2v56h58V2" fill="none" stroke="#76bc2d" strokeWidth="4" strokeDasharray="5 4" /><path d="M10 16h22v5H16v28h28V34h5v21H10z" fill="#a3a3a3" /><path d="M38 0h22v24l-7-5-18 25-9-7 19-25z" fill="#5ea0ef" /></>,
    <><Clock ring="#1f7fdb" /><path d="M8 10C-2 26 0 48 16 58" fill="none" stroke="#76bc2d" strokeWidth="4" /><path d="M12 50l14 10H10z" fill="#76bc2d" /></>,
    <><path d="M20 38L3 58" stroke="#198ab3" strokeWidth="7" strokeLinecap="round" /><ellipse cx="36" cy="23" rx="21" ry="21" fill="#fff" stroke="#32d4f5" strokeWidth="5" /></>,
    <><Grid x={11} w={51} /><Mag x={1} y={24} s={0.65} /></>,
    <><Server w={38} h={55} /><path d="M20 60V36L40 18l20 18v24z" fill="#0078d4" stroke="#32bedd" strokeWidth="2" /><path d="M34 48h12v12H34z" fill="#005ba1" /><rect x="37" y="30" width="6" height="10" rx="3" fill="#003067" /></>,
    <><path d="M2 14V4h56v10h-6V9H8v5zM2 44v11h56V44h-6v5H8v-5z" fill="#949494" /><path d="M30 14L44 30v14H16V30z" fill="#32bedd" /><path d="M30 14L44 30H16z" fill="#50e6ff" /><path d="M16 44L30 30l14 14z" fill="#003f73" /></>,
    <><path d={HEART} fill={B} /><path d="M0 30h14l4-8 6 20 6-22 6 22 6-14h18" fill="none" stroke="#fff" strokeWidth="3" /></>,
    <><Win /><path d="M14 22h10l3 3h20v24H14z" fill="#f2f2f2" /><path d="M14 22h10l3 3H14z" fill="#5ea0ef" /></>,
    <><Win /><path d="M14 23h34v26H14z" fill="#fff" /><path d="M14 19h10l3 4H14z" fill="#f78d1e" /></>,
    <><rect y="5" width="60" height="50" fill="#a67af4" /><rect y="5" width="60" height="13" fill="#773adc" /><rect x="7" y="22" width="13" height="28" fill="#f2f2f2" /><rect x="23" y="22" width="14" height="28" fill="#e6dcf9" /><rect x="40" y="22" width="13" height="28" fill="#d2c2f2" /></>,
    <><path d="M30 0l12 10 5 11-5 11-7 5v4l3 3-3 3 2 2-4 4 1 3-4 4-3-4V37l-7-5-5-11 5-11z" fill={YE} /><circle cx="30" cy="6" r="2.5" fill="#fff" /><path d="M21 18h18M21 23h18" stroke="#f58c1e" strokeWidth="2.5" /></>,
    <><ellipse cx="17" cy="18" rx="15" ry="17" fill="#f2f2f2" stroke="#b796f9" strokeWidth="5" /><path d="M17 34v12M30 24h16M24 32l14 12" stroke="#773adc" strokeWidth="4" /><circle cx="52" cy="24" r="7" fill="#b796f9" /><circle cx="17" cy="52" r="7.5" fill="#a67af4" /><circle cx="42" cy="46" r="7" fill="#a67af4" /></>,
    <><rect y="5" width="60" height="50" fill={B} /><rect y="5" width="60" height="13" fill="#0078d4" /><path d="M6 23h14v8H6zM24 23h12v8H24zM41 23h13v8H41zM6 35h14v7H6z" fill="#e3eefa" /><path d="M24 35h12v7H24zM41 35h13v7H41zM6 46h14v6H6zM24 46h12v6H24zM41 46h13v6H41z" fill="#ffcf0f" /></>,
    <><path d="M60 6L47 0H32L0 34l22 26 36-35z" fill="url(#gp4)" /><circle cx="50" cy="11" r="5" fill="#fff" stroke="#552f99" strokeWidth="3" /></>,
    <><path d="M6 26L30 4l10-4 6 6-30 30z" fill="#773adc" /><path d="M60 18L50 8H36L8 34l22 26 28-28z" fill="url(#gp4)" /><circle cx="43" cy="6" r="3.5" fill="#fff" stroke="#24204d" strokeWidth="2" /><circle cx="52" cy="16" r="3.5" fill="#fff" stroke="#552f99" strokeWidth="2" /></>,
    <><path d="M20 14V5h20v9" fill="none" stroke="#a3a3a3" strokeWidth="3" /><rect y="12" width="60" height="46" fill={B} /><rect y="22" width="60" height="6" fill="#9cebff" /><rect x="22" y="28" width="14" height="7" fill="#005ba1" /><path d="M0 38l14 7v-7l-14-5z" fill="#9cc4f2" /><path d="M50 58V40c0-6 6-6 10-5v23z" fill="#5ea0ef" /></>,
    <><rect width="52" height="50" fill="#5ea0ef" /><rect width="52" height="13" fill="#0078d4" /><rect x="9" y="17" width="51" height="43" fill={CY} /><rect x="9" y="17" width="51" height="13" fill="#198ab3" /></>,
    // row 5
    <><path d="M11 26C12 15 22 10 35 10V0l18 16-18 14V20c-10 0-17 2-24 6z" fill="#4fe3c0" /><rect x="3" y="46" width="54" height="14" fill="#767676" /><path d="M3 38h5v8H3zM52 38h5v8h-5z" fill="#949494" /><rect x="8" y="46" width="44" height="8" fill="#fff" /><path d="M10 24h10v28H10zM24 24h10v28H24z" fill="#0078d4" /><rect x="38" y="24" width="10" height="28" fill="#36c7b0" /></>,
    <><circle cx="25" cy="26" r="25" fill={B} /><circle cx="15" cy="26" r="9" fill="#f2f2f2" /><circle cx="35" cy="10" r="5" fill="#f2f2f2" /><path d="M38 30h12v4l10 26H28l10-26z" fill="#c3f1ff" stroke="#1f9fb8" strokeWidth="2" /><path d="M34 46h20l5 14H29z" fill="#36c7b0" /></>,
    <><Atom /><Ball cx={30} cy={30} r={11} /></>,
    <><Cloud x={2} w={56} h={42} /><rect x="3" y="44" width="54" height="4" fill="#198ab3" /><rect x="5" y="50" width="38" height="4" fill="#32bedd" /><rect x="5" y="56" width="30" height="4" fill="#50e6ff" /></>,
    <><path d="M6 5l5-5h45v54l-3 6H6z" fill="url(#gb)" /><path d="M11 0h45v54l-3 6V4H11z" fill="#005ba1" /><rect x="19" y="12" width="22" height="12" fill="#f2f2f2" /><path d="M3 10h6v6H3zM3 19h6v6H3zM3 29h6v6H3zM3 38h6v6H3zM3 48h6v6H3z" fill="#005ba1" /></>,
    <><rect x="20" y="0" width="20" height="20" fill="#0078d4" /><rect x="24" y="4" width="12" height="12" fill="#fff" /><path d="M30 20v12M12 40v-8h36v8M30 32v18" fill="none" stroke="#50e6ff" strokeWidth="3.5" /><rect x="0" y="38" width="18" height="17" fill="#76bc2d" /><rect x="21" y="44" width="18" height="16" fill="#76bc2d" /><rect x="42" y="38" width="18" height="17" fill="#76bc2d" /></>,
];

const identity = [
    <><Pyr /><path d={HEART} transform="translate(26 32) scale(.52 .48)" fill="#e62323" opacity=".9" /><path d="M28 46h6l2-4 3 8 3-9 3 5h7" fill="none" stroke="#fff" strokeWidth="1.5" /></>,
    <><Grid f="url(#gb5)" w={52} /><Gem x={23} y={22} s={0.75} /></>,
    <><Pyr /><Person x={22} y={32} s={0.46} head="#a67af4" body="#a67af4" collar="#e6dcf9" /><ellipse cx="49" cy="43" rx="3.5" ry="4.5" fill="#773adc" /><path d="M44 57c-1-6 1-8 5-8s6 2 5 8z" fill="#773adc" /></>,
    <><Pyr /><path d="M45 30L30 58h15z" fill="#b796f9" /><path d="M45 30l15 28H45z" fill="#773adc" /></>,
    <Pyr l="#faa21d" r="#ef7100" low="#ffbd3f" bl="#f78d1e" br="#dc5f00" />,
    <Pyr />,
    <><Grid f="url(#gb5)" w={52} /><circle cx="46" cy="46" r="14" fill="#1f9fb8" /><path d="M40 36l10-2 8 7 1 10-6 5-1-8-8-2z" fill="#b4ec36" /></>,
    <><Person x={24} y={16} s={0.6} head="#0078d4" body="#0078d4" collar="#c3f1ff" /><Person y={6} s={0.85} /></>,
    <><path d="M8 14C16 4 24 0 30 0s14 4 22 14M8 46c8 10 16 14 22 14s14-4 22-14" fill="none" stroke="#0078d4" strokeWidth="2.5" /><path d="M4 20v20M56 20v20" stroke="#0078d4" strokeWidth="2.5" /><circle cx="9" cy="10" r="5" fill="#fff" stroke="#32bedd" strokeWidth="3" /><circle cx="51" cy="10" r="5" fill="#fff" stroke="#32bedd" strokeWidth="3" /><circle cx="9" cy="50" r="5" fill="#fff" stroke="#32bedd" strokeWidth="3" /><circle cx="51" cy="50" r="5" fill="#fff" stroke="#32bedd" strokeWidth="3" /><Person x={14} y={11} s={0.53} head="#a67af4" body="#773adc" collar="#c9b0f7" /></>,
    <><Pyr /><path d="M43 26l8 7 2 8-6 6v4l2 2-2 2 1 2-4 5-3-4V47l-6-6 2-8z" fill={YE} /><path d="M37 36h10M37 39h10" stroke="#f58c1e" strokeWidth="1.5" /></>,
    <Person head="#5fd7f2" body="url(#gt2)" />,
];

const libraries = [
    ['Android Mockups', true], ['AWS Architecture 2017', true], ['AWS Architecture 2019', true],
    ['AWS Architecture 2021', true], ['Azure 2015', true], ['Azure 2019', true],
    ['Azure 2021', true, true], ['BPMN 2.0', false], ['Circuit Diagrams', true],
    ['Cisco Network Icons', true], ['Data Flow', false], ['Dynamic Shapes', false],
    ['Enterprise Architecture', true], ['Enterprise Integration', true], ['Entity Relationship', false],
];

const Gradients = () => {
    const v = (id, a, b) => (
        <linearGradient id={id} x1="0" y1="0" x2="0" y2="1">
            <stop offset="0" stopColor={a} />
            <stop offset="1" stopColor={b} />
        </linearGradient>
    );
    return (
        <svg className="absolute w-0 h-0">
            <defs>
                {v('gb', '#5ea0ef', '#0078d4')}
                {v('gb2', '#3f8fe8', '#0f75d0')}
                {v('gb3', '#5ea0ef', '#0f6cc8')}
                {v('gb4', '#4f9fe8', '#2a9bd8')}
                {v('gb5', '#5ea0ef', '#1883db')}
                {v('gc', '#32d4f5', '#32bedd')}
                {v('gg', '#76bc2d', '#5e9624')}
                {v('gg2', '#86d633', '#76bc2d')}
                {v('gp', '#773adc', '#7f45dc')}
                {v('gp2', '#a67af4', '#773adc')}
                {v('gp3', '#9f75e8', '#773adc')}
                {v('gp4', '#b796f9', '#6f45c0')}
                {v('go', '#faa21d', '#ef7100')}
                {v('gy', '#ffd70f', '#fea11b')}
                {v('gfy', '#ffd400', '#ffb900')}
                {v('gs', '#b3b3b3', '#999999')}
                {v('gt', '#32d4f5', '#198ab3')}
                {v('gt2', '#5ac8e6', '#32a8c9')}
                {v('gt3', '#7ecbbf', '#6ec5b8')}
                {v('gr', '#e62323', '#c4181a')}
                <linearGradient id="gcy" x1="0" y1="0" x2="1" y2="0">
                    <stop offset="0" stopColor="#005ba1" />
                    <stop offset=".5" stopColor="#0078d4" />
                    <stop offset="1" stopColor="#005ba1" />
                </linearGradient>
            </defs>
        </svg>
    );
};

const Checkbox = ({ checked, wide }) => (
    checked ? (
        <span className={`flex h-[40px] shrink-0 items-center justify-center rounded-[7px] bg-[#3e40c0] ${wide ? 'w-[40px]' : 'w-[39px]'}`}>
            <svg viewBox="0 0 40 40" className="w-[38px] h-[40px]">
                <path d="M7 23l10 11L33 6" fill="none" stroke="#fff" strokeWidth="3.6" />
            </svg>
        </span>
    ) : (
        <span className="block w-[39px] h-[40px] shrink-0 rounded-[7px] border-2 border-[#a0a4ab] bg-white" />
    )
);

const IconRow = ({ items }) => (
    <div className="flex flex-wrap w-[1780px] -ml-[3px] gap-x-5 gap-y-[35px]">
        {items.map((icon, i) => (
            <svg key={i} viewBox="0 0 60 60" className="w-[60px] h-[60px] overflow-visible">{icon}</svg>
        ))}
    </div>
);

const Section = ({ title, items, lift, className }) => (
    <div className={`rounded-3xl border-2 border-[#e2e5e9] bg-white pl-[47px] ${lift ? 'pt-[48px]' : 'pt-[49px]'} ${className}`}>
        <div className={`flex items-center h-[40px] ${lift ? 'mb-[26px]' : 'mb-[25px]'}`}>
            <Checkbox checked wide />
            <span className="ml-[13px] text-[34px] font-light tracking-[0.95px] text-[#282c33]">{title}</span>
        </div>
        <IconRow items={items} />
    </div>
);

const App = () => {
    return (
        <div className="relative flex flex-col w-[2542px] h-[1796px] overflow-hidden bg-white font-['Inter',sans-serif] text-[#282c33]">
            <Gradients />

            <header className="flex shrink-0 items-center h-[153px] border-b-2 border-[#e2e5ea]">
                <h1 className="w-[625px] pl-[29px] pb-[6px] text-[60px] font-semibold tracking-[0.8px]">Insert content</h1>
                <nav className="flex h-full gap-[61px]">
                    <div className="flex items-center pb-[8px] text-[45px] font-semibold tracking-[0.5px] text-[#737780]">Templates</div>
                    <div className="flex items-center pb-[8px] text-[45px] font-semibold tracking-[0.5px] text-[#737780]">Data</div>
                    <div className="relative flex items-center -ml-[2px] pb-[8px] text-[45px] font-semibold tracking-[0.2px] text-[#3e40c0]">
                        Shapes
                        <span className="absolute -left-[11px] -right-[9px] bottom-0 h-[9px] rounded-t-lg bg-[#3e40c0]" />
                    </div>
                </nav>
                <svg viewBox="0 0 32 32" className="ml-auto mr-[58px] mb-[10px] w-[32px] h-[32px]">
                    <path d="M1 1l30 30M31 1L1 31" stroke="#282c33" strokeWidth="2.4" />
                </svg>
            </header>

            <div className="flex flex-1 min-h-0">
                <aside className="relative flex flex-col shrink-0 w-[568px] border-r-2 border-[#e2e5ea] bg-[#f9fafc]">
                    <div className="flex shrink-0 items-center h-[121px] pl-[28px] pr-[41px] border-b-2 border-[#e2e5ea]">
                        <div className="flex items-center w-full h-[79px] px-[20px] pt-[2px] rounded-md border-2 border-[#a3a6ac] bg-white">
                            <span className="text-[34px] font-light tracking-[1px] text-[#6f737b]">Search</span>
                            <svg viewBox="0 0 36 36" className="ml-auto mr-[2px] w-[36px] h-[36px]">
                                <circle cx="15" cy="15" r="12" fill="none" stroke="#5f6369" strokeWidth="2" />
                                <path d="M24 24l10 10" stroke="#5f6369" strokeWidth="3.5" />
                            </svg>
                        </div>
                    </div>
                    <div className="flex shrink-0 items-center h-[123px] pl-[69px] pb-[7px] border-b-2 border-[#e2e5ea] text-[34px] font-bold tracking-[0.8px]">
                        Recommended for you
                    </div>
                    <div className="relative flex flex-col shrink-0 h-[1041px] pt-[22px] border-b-2 border-[#e2e5ea]">
                        <div className="flex shrink-0 items-center h-[77px] pl-[33px] pb-[2px]">
                            <svg viewBox="0 0 20 18" className="w-[20px] h-[18px]"><path d="M0 0h20L10 18z" fill="#737780" /></svg>
                            <span className="ml-[20px] text-[36px] font-semibold">Standard libraries</span>
                        </div>
                        {libraries.map(([name, expandable, checked]) => (
                            <div key={name} className={`flex shrink-0 items-center h-[61px] ml-2 pl-[41px] ${checked ? 'bg-[#cfe4fc]' : ''}`}>
                                <span className="flex items-center w-[43px]">
                                    {expandable && <svg viewBox="0 0 14 18" className="w-[14px] h-[18px] mt-[4px]"><path d="M0 0l14 9L0 18z" fill="#282c33" /></svg>}
                                </span>
                                <Checkbox checked={checked} />
                                <span className="ml-[13px] text-[34px] font-light tracking-[1.05px] whitespace-nowrap">{name}</span>
                            </div>
                        ))}
                        <span className="absolute left-[547px] top-[105px] w-[14px] h-[310px] rounded-full bg-[#d5d7db]" />
                    </div>
                    <div className="flex shrink-0 items-center h-[122px] pl-[34px] pr-[17px] border-b-2 border-[#e2e5ea]">
                        <svg viewBox="0 0 16 20" className="w-[16px] h-[20px]"><path d="M0 0l16 10L0 20z" fill="#737780" /></svg>
                        <span className="ml-[23px] text-[36px] font-semibold tracking-[-0.1px]">My libraries</span>
                        <svg viewBox="0 0 46 46" className="ml-auto mr-[2px] w-[46px] h-[46px]">
                            <circle cx="23" cy="23" r="21" fill="none" stroke="#282c33" strokeWidth="2.4" />
                            <path d="M23 9v28M9 23h28" stroke="#282c33" strokeWidth="2" />
                        </svg>
                    </div>
                    <div className="flex shrink-0 items-center h-[122px] pl-[34px] border-b-2 border-[#e2e5ea]">
                        <svg viewBox="0 0 16 20" className="w-[16px] h-[20px]"><path d="M0 0l16 10L0 20z" fill="#737780" /></svg>
                        <span className="ml-[23px] text-[36px] font-semibold tracking-[-0.1px]">Shared with me</span>
                    </div>
                    <div className="flex flex-1 items-center justify-center pt-[4px] pr-[5px] text-[#3e40c0]">
                        <svg viewBox="0 0 46 40" className="w-[46px] h-[40px]">
                            <path d="M16 1h24a4 4 0 0 1 4 4v30a4 4 0 0 1-4 4H16" fill="none" stroke="#3e40c0" strokeWidth="2" />
                            <path d="M0 20h32M24 11l9 9-9 9" fill="none" stroke="#3e40c0" strokeWidth="2" />
                        </svg>
                        <span className="ml-[17px] text-[35px] font-medium tracking-[0.2px]">Import shapes</span>
                    </div>
                </aside>

                <main className="relative flex flex-col flex-1 min-w-0">
                    <div className="flex-1 min-h-0 overflow-hidden border-b-2 border-[#eef0f2]">
                        <div className="flex flex-col gap-[42px] -mt-[50px] ml-[66px] mr-[59px]">
                            <Section title="Databases" items={databases} className="h-[258px]" />
                            <Section title="DevOps" items={devops} className="h-[258px]" />
                            <Section title="General Icons" items={general} lift className="h-[638px]" />
                            <Section title="Identity" items={identity} lift className="h-[258px]" />
                        </div>
                    </div>
                    <div className="flex shrink-0 items-center justify-end h-[156px] pt-[8px] pr-[34px]">
                        <button className="w-[510px] h-[80px] rounded-lg bg-[#3e40c0] text-[35px] font-medium text-white">Use selected shapes</button>
                    </div>
                    <span className="absolute right-0 top-[514px] w-[14px] h-[243px] rounded-full bg-[#dcdde0]" />
                </main>
            </div>
        </div>
    );
};

export default App;
